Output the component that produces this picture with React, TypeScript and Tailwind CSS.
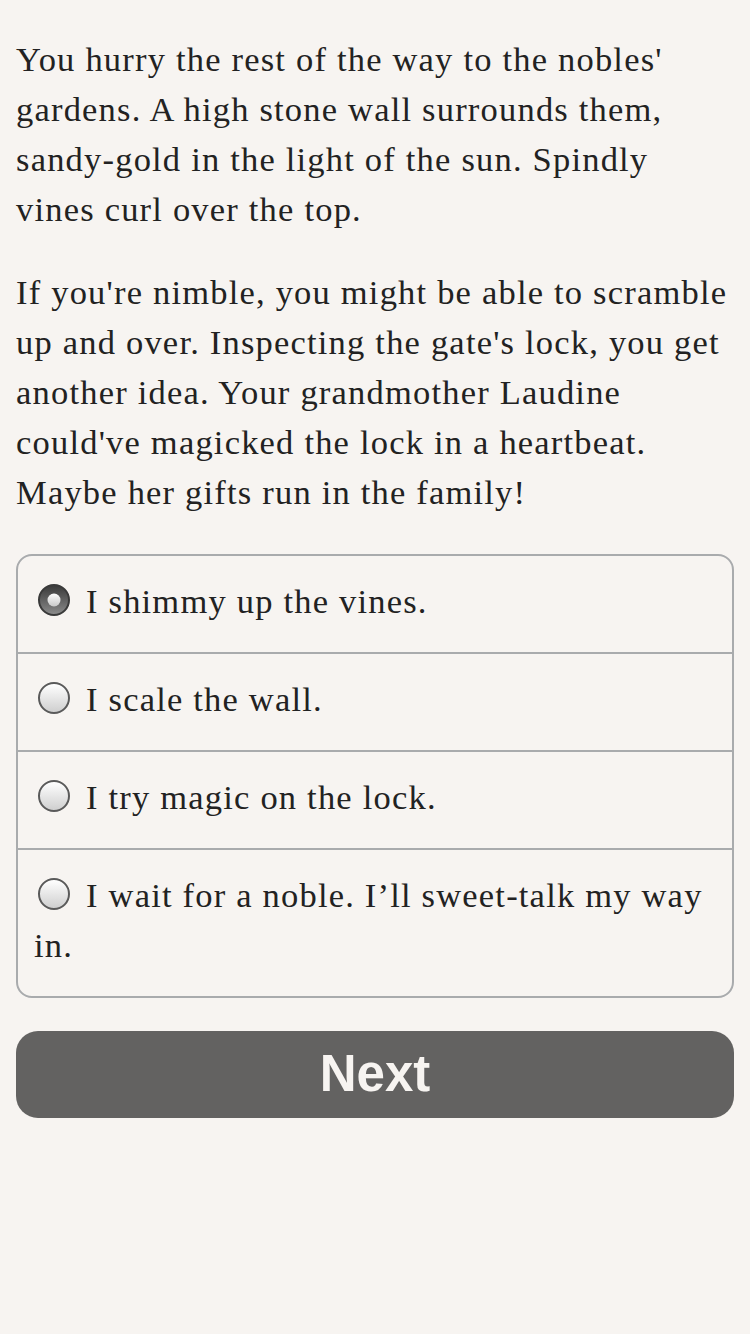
import { useState } from "react";

const choices = [
    "I shimmy up the vines.",
    "I scale the wall.",
    "I try magic on the lock.",
    "I wait for a noble. I\u2019ll sweet-talk my way in.",
];

function Radio({ checked }: { checked: boolean }) {
    if (checked) {
        return (
            <span className="inline-block align-[-3px] mr-[16px] ml-[4px] w-[32px] h-[32px] rounded-full border-2 border-[#3a3a3a] bg-gradient-to-b from-[#3c3c3c] to-[#8a8a8a] relative">
                <span className="absolute left-1/2 top-1/2 -translate-x-1/2 -translate-y-1/2 w-[13px] h-[13px] rounded-full bg-gradient-to-b from-[#ffffff] to-[#c9c9c9]" />
            </span>
        );
    }
    return (
        <span className="inline-block align-[-3px] mr-[16px] ml-[4px] w-[32px] h-[32px] rounded-full border-2 border-[#5a5a5a] bg-gradient-to-b from-[#ffffff] to-[#cfcfcf]" />
    );
}

export default function App() {
    const [selected, setSelected] = useState(0);

    return (
        <div className="min-h-[1334px] bg-[#f7f4f1] px-[16px] pt-[34px] text-[#222222] font-['Liberation_Serif',serif] tracking-[1.2px]">
            <p className="text-[34.5px] leading-[50px]">
                You hurry the rest of the way to the nobles' gardens. A high stone wall surrounds them, sandy&#8209;gold in the light of the sun. Spindly vines curl over the top.
            </p>
            <p className="mt-[33px] text-[34.5px] leading-[50px]">
                If you're nimble, you might be able to scramble up and over. Inspecting the gate's lock, you get another idea. Your grandmother Laudine could've magicked the lock in a heartbeat. Maybe her gifts run in the family!
            </p>

            <div className="mt-[37px] border-2 border-[#a9abad] rounded-[16px] overflow-hidden">
                {choices.map((c, i) => (
                    <div
                        key={c}
                        onClick={() => setSelected(i)}
                        className={`px-[16px] pt-[20px] pb-[26px] text-[34.5px] leading-[50px] ${i > 0 ? "border-t-2 border-[#a9abad]" : ""}`}
                    >
                        <Radio checked={selected === i} />
                        {c}
                    </div>
                ))}
            </div>

            <button className="mt-[33px] w-full h-[87px] rounded-[22px] bg-[#636261] text-[#f7f4f1] text-[51px] font-bold tracking-normal font-['Liberation_Sans',sans-serif]">
                Next
            </button>
        </div>
    );
}
